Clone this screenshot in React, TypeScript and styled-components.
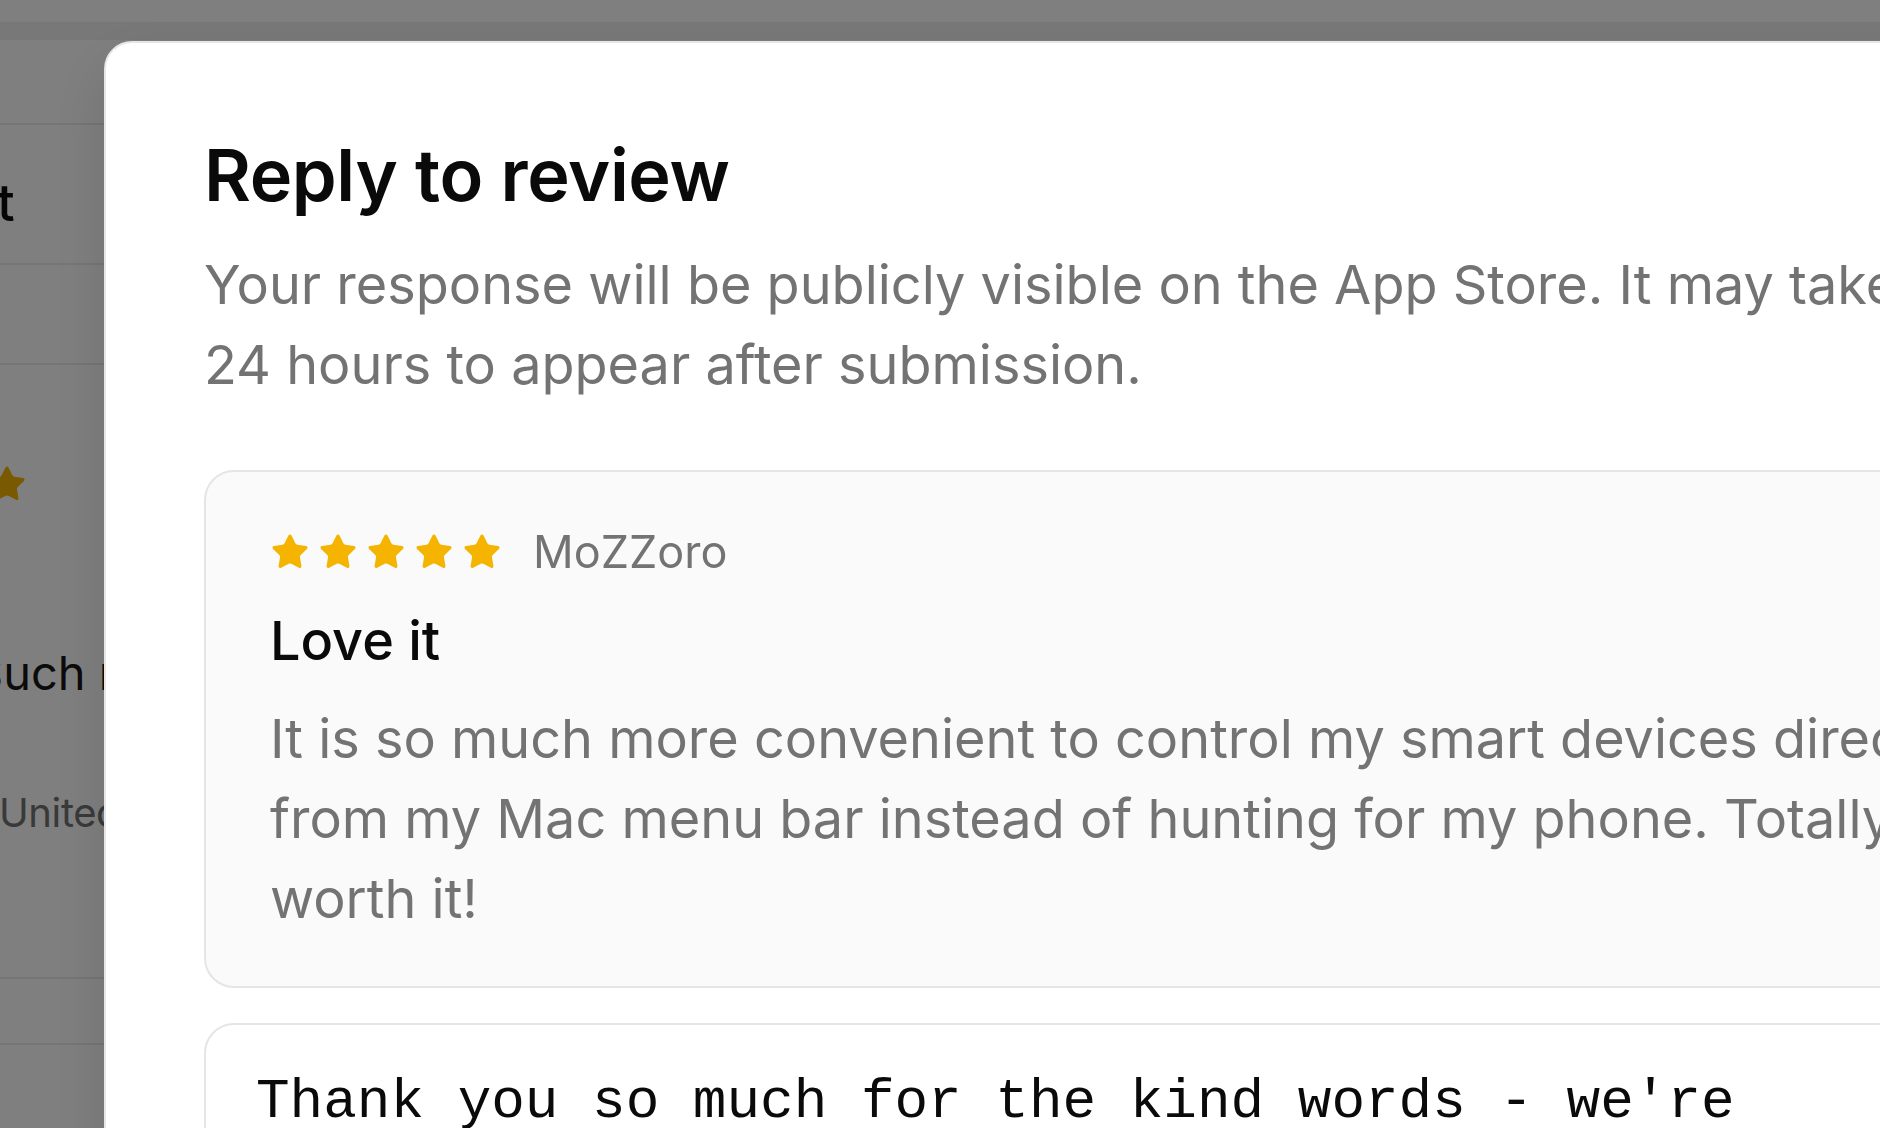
import React from "react";
import styled, { createGlobalStyle } from "styled-components";
import { Star } from "lucide-react";

const GlobalStyle = createGlobalStyle`
  html, body {
    margin: 0;
    padding: 0;
    height: 100%;
    overflow: hidden;
    background: #ffffff;
  }
  body {
    font-family: Inter, "Noto Sans", Arial, sans-serif;
    -webkit-font-smoothing: antialiased;
  }
  #root { height: 100%; }
`;

/* ---------- background page (under the overlay) ---------- */

const Page = styled.div`
  height: 100vh;
  display: flex;
  flex-direction: column;
  background: #ffffff;
  overflow: hidden;
`;

const TopBar = styled.div`
  height: 22px;
  flex-shrink: 0;
  background: #ffffff;
`;

const SubBar = styled.div`
  height: 18px;
  flex-shrink: 0;
  background: #f1f1f1;
`;

const ListRow = styled.div<{ $h: number }>`
  height: ${(p) => p.$h}px;
  flex-shrink: 0;
  border-bottom: 2px solid #ececec;
  display: flex;
  flex-direction: column;
  box-sizing: border-box;
  overflow: hidden;
`;

const SortLabel = styled.div`
  margin: 44px 0 0 -283px;
  font-size: 52px;
  line-height: 68px;
  font-weight: 500;
  color: #0a0a0a;
  white-space: nowrap;
`;

const BgStars = styled.div`
  display: flex;
  gap: 8px;
  margin: 99px 0 0 -205px;
  color: #f4b400;
`;

const BgBody = styled.div`
  margin: 135px 0 0 -27px;
  font-size: 47px;
  line-height: 68px;
  color: #171717;
  white-space: nowrap;
`;

const BgMeta = styled.div`
  margin: 76px 0 0 -1px;
  font-size: 40px;
  line-height: 60px;
  letter-spacing: -0.4px;
  color: #737373;
  white-space: nowrap;
`;

/* ---------- overlay + dialog ---------- */

const Overlay = styled.div`
  position: fixed;
  inset: 0;
  background: rgba(0, 0, 0, 0.5);
`;

const Dialog = styled.div`
  position: fixed;
  left: 104px;
  top: 41px;
  width: 2052px;
  box-sizing: border-box;
  background: #ffffff;
  border: 2px solid #e6e6e6;
  border-radius: 28px;
  padding: 88px 98px 60px 98px;
  display: flex;
  flex-direction: column;
  box-shadow: 0 24px 60px rgba(0, 0, 0, 0.12);
`;

const Title = styled.h2`
  margin: 0;
  font-size: 72px;
  line-height: 88px;
  font-weight: 600;
  letter-spacing: -0.4px;
  color: #0a0a0a;
`;

const Description = styled.p`
  margin: 26px 0 0 0;
  font-size: 54px;
  line-height: 80px;
  font-weight: 400;
  color: #737373;
`;

const ReviewCard = styled.div`
  margin-top: 65px;
  background: #fafafa;
  border: 2px solid #e5e5e5;
  border-radius: 30px;
  padding: 52px 64px 47px 64px;
  display: flex;
  flex-direction: column;
`;

const ReviewHeader = styled.div`
  display: flex;
  align-items: center;
  gap: 31px;
  height: 56px;
`;

const Stars = styled.div`
  display: flex;
  align-items: center;
  gap: 8px;
  color: #f4b400;
`;

const Author = styled.span`
  font-size: 45px;
  line-height: 56px;
  color: #737373;
`;

const ReviewTitle = styled.div`
  margin-top: 27px;
  font-size: 54px;
  line-height: 68px;
  font-weight: 500;
  color: #0a0a0a;
`;

const ReviewBody = styled.p`
  margin: 24px 0 0 0;
  font-size: 54px;
  line-height: 80px;
  color: #737373;
`;

const ReplyField = styled.textarea`
  margin-top: 35px;
  width: 100%;
  box-sizing: border-box;
  background: #ffffff;
  border: 2px solid #e5e5e5;
  border-radius: 30px;
  padding: 35px 44px 35px 50px;
  font-family: "Liberation Mono", "DejaVu Sans Mono", monospace;
  font-size: 56px;
  line-height: 84px;
  color: #0a0a0a;
  resize: none;
  outline: none;
`;

const StarRow: React.FC<{ size: number }> = ({ size }) => (
  <>
    {[0, 1, 2, 3, 4].map((i) => (
      <Star key={i} size={size} fill="currentColor" strokeWidth={1} />
    ))}
  </>
);

export default function App() {
  return (
    <>
      <GlobalStyle />
      <Page>
        <TopBar />
        <SubBar />
        <ListRow $h={85} />
        <ListRow $h={140}>
          <SortLabel>Most recent</SortLabel>
        </ListRow>
        <ListRow $h={100} />
        <ListRow $h={614}>
          <BgStars>
            <StarRow size={40} />
          </BgStars>
          <BgBody>Such responsive controls</BgBody>
          <BgMeta>United States</BgMeta>
        </ListRow>
        <ListRow $h={66} />
      </Page>
      <Overlay />
      <Dialog role="dialog" aria-labelledby="reply-title">
        <Title id="reply-title">Reply to review</Title>
        <Description>
          Your response will be publicly visible on the App Store. It may take up to
          24 hours to appear after submission.
        </Description>
        <ReviewCard>
          <ReviewHeader>
            <Stars>
              <StarRow size={40} />
            </Stars>
            <Author>MoZZoro</Author>
          </ReviewHeader>
          <ReviewTitle>Love it</ReviewTitle>
          <ReviewBody>
            It is so much more convenient to control my smart devices directly from my
            Mac menu bar instead of hunting for my phone. Totally worth it!
          </ReviewBody>
        </ReviewCard>
        <ReplyField
          rows={4}
          defaultValue="Thank you so much for the kind words - we're thrilled that controlling your devices from the menu bar saves you time. Enjoy!"
        />
      </Dialog>
    </>
  );
}
